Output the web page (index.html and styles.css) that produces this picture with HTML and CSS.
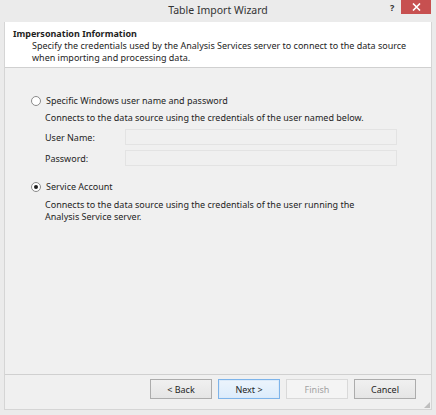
FILE: index.html
```html
<!DOCTYPE html>
<html>
<head>
<meta charset="utf-8">
<link rel="stylesheet" href="styles.css">
</head>
<body>
<div class="window">
  <div class="titlebar">
    <div class="title">Table Import Wizard</div>
    <div class="help">?</div>
    <div class="close">
      <svg width="9" height="8" viewBox="0 0 9 8"><path d="M1 0.5 L8 7.5 M8 0.5 L1 7.5" stroke="#fff" stroke-width="1.6"/></svg>
    </div>
  </div>
  <div class="client">
    <div class="header">
      <div class="h-title">Impersonation Information</div>
      <div class="h-desc">Specify the credentials used by the Analysis Services server to connect to the data source<br>when importing and processing data.</div>
    </div>
    <div class="body">
      <div class="option">
        <span class="radio"></span>
        <span class="opt-label">Specific Windows user name and password</span>
      </div>
      <div class="opt-desc">Connects to the data source using the credentials of the user named below.</div>
      <div class="fields">
        <span class="f-label">User Name:</span>
        <span class="input"></span>
        <span class="f-label">Password:</span>
        <span class="input"></span>
      </div>
      <div class="option option2">
        <span class="radio checked"></span>
        <span class="opt-label">Service Account</span>
      </div>
      <div class="opt-desc desc2">Connects to the data source using the credentials of the user running the<br>Analysis Service server.</div>
    </div>
    <div class="footer">
      <button class="btn">&lt; Back</button>
      <button class="btn default">Next &gt;</button>
      <button class="btn disabled">Finish</button>
      <button class="btn">Cancel</button>
      <span class="grip"></span>
    </div>
  </div>
</div>
</body>
</html>
```
FILE: styles.css
```css
html, body {
  margin: 0;
  padding: 0;
}
body {
  width: 436px;
  height: 415px;
  background: #ebebeb;
  font-family: "Noto Sans", "Open Sans", sans-serif;
  font-size: 9px;
  color: #1e1e1e;
  overflow: hidden;
}
.window {
  display: flex;
  flex-direction: column;
  height: 415px;
}
.titlebar {
  position: relative;
  height: 22px;
  display: flex;
  align-items: center;
  justify-content: center;
}
.title {
  font-size: 10.5px;
  color: #333;
  margin-top: -2px;
}
.help {
  position: absolute;
  left: 390px;
  top: 1px;
  font-size: 9px;
  font-weight: bold;
  color: #333;
}
.close {
  position: absolute;
  left: 401px;
  top: 0;
  width: 30px;
  height: 14px;
  background: #c75050;
  display: flex;
  align-items: center;
  justify-content: center;
}
.close svg { display: block; }
.client {
  margin: 0 4px 5px 4px;
  border: 1px solid #d5d5d5;
  border-top: none;
  background: #f0f0f0;
  flex: 1;
  display: flex;
  flex-direction: column;
}
.header {
  background: #fff;
  border-bottom: 1px solid #d0d0d0;
  height: 46px;
  padding: 6px 0 0 8px;
  box-sizing: border-box;
}
.h-title {
  font-weight: bold;
  line-height: 12px;
}
.h-desc {
  padding-left: 19px;
  line-height: 12px;
}
.body {
  flex: 1;
  padding: 27px 0 0 26px;
}
.option {
  display: flex;
  align-items: center;
  gap: 5px;
  height: 12px;
}
.option2 { margin-top: 15px; }
.radio {
  width: 8px;
  height: 8px;
  border: 1px solid #8a8a8a;
  border-radius: 50%;
  background: #fff;
  position: relative;
}
.radio.checked::after {
  content: "";
  position: absolute;
  left: 2px;
  top: 2px;
  width: 4px;
  height: 4px;
  border-radius: 50%;
  background: #1e1e1e;
}
.opt-label { line-height: 12px; }
.opt-desc {
  margin: 5px 0 0 14px;
  line-height: 12px;
}
.desc2 { margin-top: 6px; }
.fields {
  display: grid;
  grid-template-columns: 80px 272px;
  row-gap: 5px;
  margin: 5px 0 0 14px;
  align-items: center;
}
.input {
  height: 16px;
  box-sizing: border-box;
  border: 1px solid #e3e3e3;
  background: #f0f0f0;
}
.footer {
  position: relative;
  border-top: 1px solid #d0d0d0;
  height: 35px;
  box-sizing: border-box;
  display: flex;
  justify-content: flex-end;
  align-items: flex-start;
  padding: 4px 15px 0 0;
  gap: 6px;
}
.btn {
  width: 62px;
  height: 20px;
  box-sizing: border-box;
  border: 1px solid #acacac;
  background: linear-gradient(#f0f0f0, #e5e5e5);
  font-family: inherit;
  font-size: 9px;
  color: #1e1e1e;
  padding: 0;
}
.btn.default {
  border-color: #7eb4ea;
  background: linear-gradient(#ecf4fc, #dcecfc);
  box-shadow: inset 0 0 0 1px #dbeaf9;
}
.btn.disabled {
  border-color: #d9d9d9;
  background: #f4f4f4;
  color: #a3a3a3;
}
.grip {
  position: absolute;
  right: 1px;
  bottom: 1px;
  width: 6px;
  height: 6px;
  background:
    radial-gradient(circle, #bbb 0.7px, transparent 0.8px) 0 0 / 2px 2px;
  clip-path: polygon(100% 0, 100% 100%, 0 100%);
}
```
